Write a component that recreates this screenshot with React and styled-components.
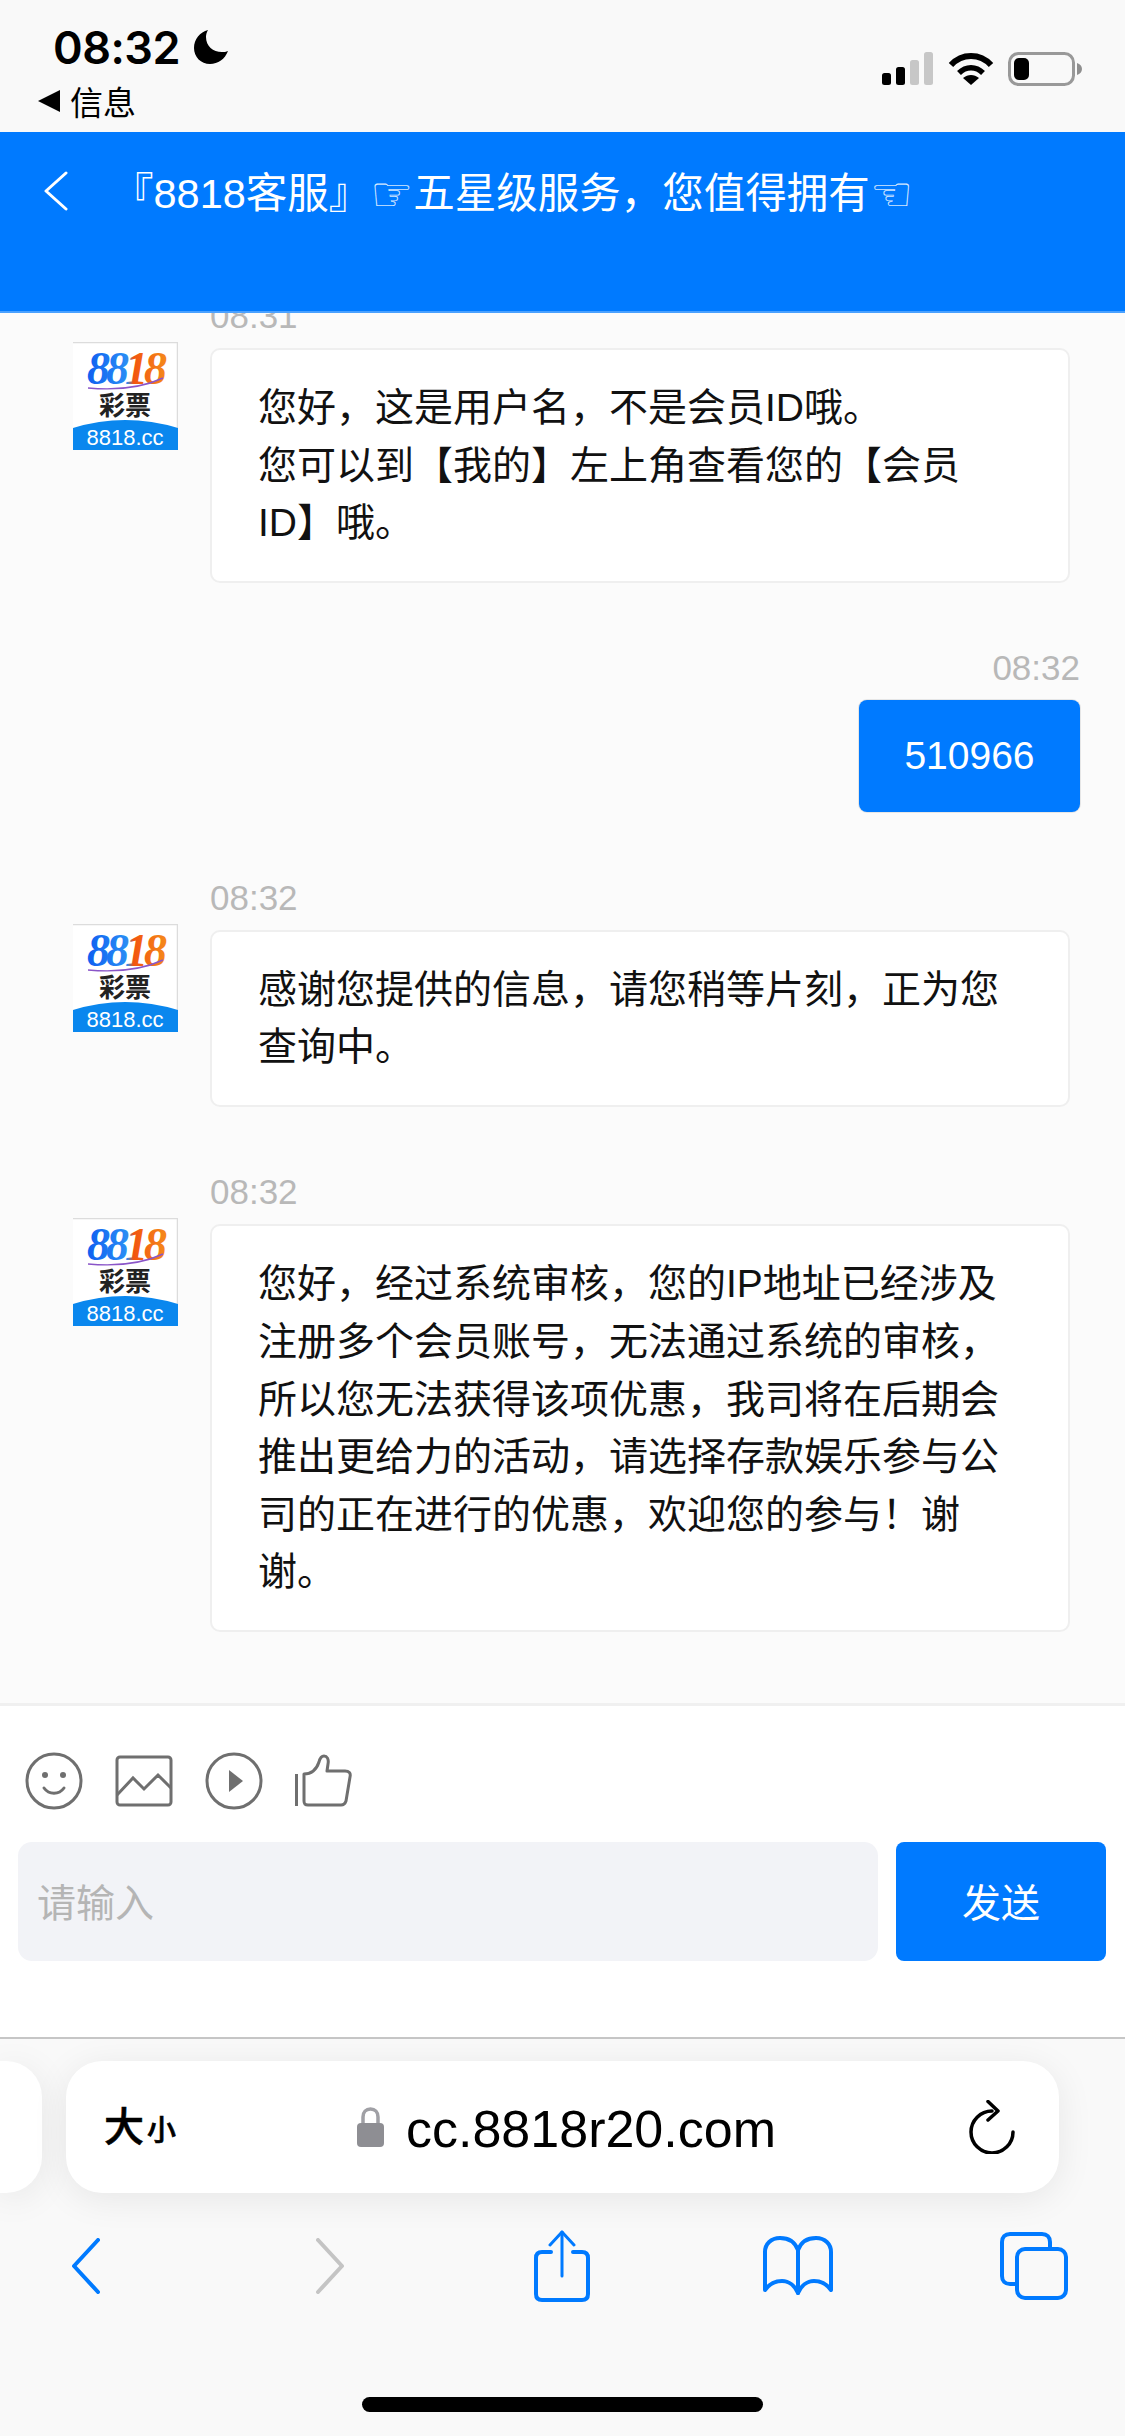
import React from "react";
import styled, { createGlobalStyle } from "styled-components";

const Global = createGlobalStyle`
  html, body { margin: 0; padding: 0; background: #f9f9f9; }
  * { box-sizing: border-box; }
`;

const FONT = `"Liberation Sans", "Noto Sans CJK SC", sans-serif`;

const Page = styled.div`
  width: 1125px;
  height: 2436px;
  display: flex;
  flex-direction: column;
  overflow: hidden;
  font-family: ${FONT};
  color: #000;
`;

/* ---- status bar ---- */
const StatusBar = styled.div`
  height: 132px;
  flex: none;
  background: #f9f9f9;
  display: flex;
  justify-content: space-between;
`;
const StatusLeft = styled.div`
  display: flex;
  flex-direction: column;
  padding: 22px 0 0 53px;
`;
const ClockRow = styled.div`
  display: flex;
  align-items: center;
  gap: 14px;
  height: 50px;
`;
const Clock = styled.span`
  font-family: Inter, "Liberation Sans", sans-serif;
  font-size: 45px;
  font-weight: 600;
  letter-spacing: -0.5px;
`;
const BackToApp = styled.div`
  display: flex;
  align-items: center;
  gap: 10px;
  height: 40px;
  margin: 9px 0 0 -15px;
  font-size: 33px;
`;
const StatusRight = styled.div`
  display: flex;
  align-items: flex-start;
  gap: 14px;
  padding: 52px 43px 0 0;
`;

/* ---- blue header ---- */
const Header = styled.header`
  height: 181px;
  flex: none;
  background: #007aff;
  border-bottom: 2px solid #4aa1ff;
  display: flex;
  align-items: flex-start;
  color: #fff;
  padding: 39px 0 0 44px;
`;
const Title = styled.h1`
  display: flex;
  align-items: center;
  margin: 0 0 0 44px;
  font-size: 41.5px;
  line-height: 46px;
  font-weight: 400;
  white-space: nowrap;
`;
const Hand = styled.span`
  font-family: "DejaVu Sans", sans-serif;
  font-size: 48px;
  line-height: 46px;
  color: rgba(255, 255, 255, 0.85);
`;

/* ---- chat ---- */
const Chat = styled.main`
  flex: none;
  height: 1393px;
  overflow: hidden;
  background: #fbfbfb;
  border-bottom: 3px solid #f0f0f0;
`;
const Thread = styled.div`
  display: flex;
  flex-direction: column;
  gap: 65.5px;
  margin-top: -17px;
`;
const Row = styled.section`
  display: flex;
  justify-content: ${(p) => (p.$mine ? "flex-end" : "flex-start")};
  padding: ${(p) => (p.$mine ? "0 45px 0 0" : "0 0 0 73px")};
`;
const AvatarFrame = styled.div`
  width: 105px;
  height: 108px;
  flex: none;
  margin: 46px 32px 0 0;
`;
const Content = styled.div`
  display: flex;
  flex-direction: column;
  align-items: ${(p) => (p.$mine ? "flex-end" : "flex-start")};
  gap: 12px;
`;
const Time = styled.div`
  height: 40px;
  line-height: 40px;
  font-size: 35px;
  color: #b8b8b8;
`;
const Bubble = styled.div`
  width: 860px;
  padding: 29px 62px 29px 46px;
  background: #fff;
  border: 2px solid #efefef;
  border-radius: 10px;
  font-size: 39px;
  line-height: 57.6px;
  color: #111;
`;
const MineBubble = styled.div`
  width: 221px;
  height: 112px;
  display: flex;
  align-items: center;
  justify-content: center;
  background: #007aff;
  border-radius: 8px;
  box-shadow: 0 0 0 1px #e6e6e6;
  font-size: 39px;
  color: #fff;
`;

/* ---- composer ---- */
const Composer = styled.footer`
  flex: none;
  height: 331px;
  background: #fff;
  padding: 0 19px 0 18px;
`;
const Tools = styled.div`
  height: 136px;
  display: flex;
  align-items: center;
  gap: 32px;
  padding: 14px 0 0 7px;
`;
const InputRow = styled.div`
  display: flex;
  gap: 18px;
  height: 119px;
`;
const Input = styled.div`
  flex: 1;
  display: flex;
  align-items: center;
  padding: 0 0 3px 19px;
  background: #f2f3f7;
  border-radius: 14px;
  font-size: 39px;
  color: #b5b5b5;
`;
const Send = styled.button`
  width: 210px;
  border: 0;
  border-radius: 8px;
  padding: 0 0 3px;
  background: #007aff;
  color: #fff;
  font-family: ${FONT};
  font-size: 39px;
`;

/* ---- safari chrome ---- */
const Browser = styled.nav`
  flex: 1;
  background: #f9f9f9;
  border-top: 2px solid #c6c6c6;
  display: flex;
  flex-direction: column;
`;
const UrlRow = styled.div`
  display: flex;
  gap: 24px;
  height: 132px;
  margin-top: 22px;
`;
const StubCard = styled.div`
  width: 42px;
  background: #fff;
  border-radius: 0 36px 36px 0;
  box-shadow: 0 6px 36px rgba(0, 0, 0, 0.08);
`;
const UrlBar = styled.div`
  width: 993px;
  display: flex;
  align-items: center;
  padding: 0 44px 0 38px;
  background: #fff;
  border-radius: 36px;
  box-shadow: 0 6px 36px rgba(0, 0, 0, 0.08);
`;
const TextSize = styled.div`
  width: 253px;
  display: flex;
  align-items: flex-end;
  gap: 3px;
  height: 46px;
  font-size: 40px;
  line-height: 46px;
  font-weight: 500;
  -webkit-text-stroke: 0.6px #000;
`;
const SmallA = styled.span`
  font-size: 29px;
  line-height: 38px;
`;
const Address = styled.div`
  flex: 1;
  display: flex;
  align-items: center;
  gap: 22px;
  font-size: 52px;
  line-height: 60px;
`;
const UrlText = styled.span`
  position: relative;
  top: 2px;
`;
const ToolBar = styled.div`
  display: grid;
  grid-template-columns: 244px 232px 236px 236px 100px;
  height: 72px;
  margin-top: 37px;
  padding-left: 36px;
`;
const ToolSlot = styled.div`
  width: 100px;
  display: flex;
  align-items: center;
  justify-content: center;
`;
const HomeIndicator = styled.div`
  width: 401px;
  height: 15px;
  margin: 95px auto 0;
  border-radius: 8px;
  background: #000;
`;

/* ---- drawings ---- */
const Logo = () => (
  <svg width="105" height="108" viewBox="0 0 105 108">
    <defs>
      <linearGradient id="logoNum" x1="0" x2="1" y1="0" y2="0">
        <stop offset="0" stopColor="#0f5ff0" />
        <stop offset="0.5" stopColor="#2a8df5" />
        <stop offset="0.58" stopColor="#f2550f" />
        <stop offset="1" stopColor="#f58a1c" />
      </linearGradient>
    </defs>
    <rect width="105" height="108" fill="#fff" />
    <path d="M0 0.5H104.5V108" fill="none" stroke="#dcdcdc" strokeWidth="1.5" />
    <text x="14" y="42" fontFamily="'Liberation Serif', serif" fontStyle="italic" fontWeight="700" fontSize="46" letterSpacing="-4" fill="url(#logoNum)">8818</text>
    <path d="M15 46Q60 50 90 36" fill="none" stroke="#8a55c8" strokeWidth="1.4" />
    <text x="26" y="73" fontFamily="'Noto Sans CJK SC', sans-serif" fontWeight="700" fontSize="26" fill="#222">彩票</text>
    <path d="M0 86Q52 70 105 86V108H0Z" fill="#0a87ee" />
    <text x="52" y="103" textAnchor="middle" fontFamily="'Liberation Sans', sans-serif" fontSize="22" fill="#fff">8818.cc</text>
  </svg>
);

const Moon = () => (
  <svg width="34" height="34" viewBox="0 0 34 34">
    <path d="M14 0C6 2 0 9 0 18c0 9 7 16 16 16 8 0 15-5 18-13-2 1-4 1-6 1C19 22 12 16 12 7c0-2 .6-5 2-7z" fill="#000" />
  </svg>
);

const Signal = () => (
  <svg width="52" height="33" viewBox="0 0 52 33">
    <rect x="0" y="21" width="9" height="12" rx="2.5" fill="#000" />
    <rect x="14" y="15" width="9" height="18" rx="2.5" fill="#000" />
    <rect x="28" y="8" width="9" height="25" rx="2.5" fill="#c7c7c7" />
    <rect x="42" y="0" width="9" height="33" rx="2.5" fill="#c7c7c7" />
  </svg>
);

const Wifi = () => (
  <svg width="46" height="33" viewBox="0 0 46 33">
    <path d="M3 13C14 1 32 1 43 13" fill="none" stroke="#000" strokeWidth="6" />
    <path d="M11 21C18 14 28 14 35 21" fill="none" stroke="#000" strokeWidth="5.5" />
    <path d="M15 26C20 22 26 22 31 26L23 33Z" fill="#000" />
  </svg>
);

const Battery = () => (
  <svg width="74" height="34" viewBox="0 0 74 34">
    <rect x="1.5" y="1.5" width="64" height="31" rx="9" fill="none" stroke="#999" strokeWidth="3" />
    <rect x="6" y="6" width="15" height="22" rx="5" fill="#000" />
    <path d="M69 11C72 12 74 14 74 17C74 20 72 22 69 23Z" fill="#8f8f8f" />
  </svg>
);

const Chevron = ({ w = 24, h = 40, color = "#fff", sw = 3, flip }) => (
  <svg width={w} height={h} viewBox={`0 0 ${w} ${h}`}>
    <path
      d={flip ? `M2 2L${w - 2} ${h / 2}L2 ${h - 2}` : `M${w - 2} 2L2 ${h / 2}L${w - 2} ${h - 2}`}
      fill="none"
      stroke={color}
      strokeWidth={sw}
      strokeLinecap="round"
      strokeLinejoin="round"
    />
  </svg>
);

const ic = { fill: "none", stroke: "#6f6f6f", strokeWidth: 3 };

const Smile = () => (
  <svg width="58" height="58" viewBox="0 0 58 58">
    <circle cx="29" cy="29" r="27" {...ic} />
    <circle cx="20" cy="23" r="3" fill="#6f6f6f" />
    <circle cx="38" cy="23" r="3" fill="#6f6f6f" />
    <path d="M19 36C24 43 34 43 39 36" {...ic} strokeLinecap="round" />
  </svg>
);
const Picture = () => (
  <svg width="58" height="52" viewBox="0 0 58 52">
    <rect x="2" y="2" width="54" height="48" rx="3" {...ic} />
    <path d="M2 40L18 23L29 34L43 20L56 33" {...ic} />
  </svg>
);
const Play = () => (
  <svg width="58" height="58" viewBox="0 0 58 58">
    <circle cx="29" cy="29" r="27" {...ic} />
    <path d="M24 18L38 29L24 40Z" fill="#6f6f6f" />
  </svg>
);
const Thumb = () => (
  <svg width="57" height="54" viewBox="0 0 57 54">
    <path d="M1.5 20V52" {...ic} />
    <path d="M9 20C18 20 22 14 24 8C25 4 27 2 29 2C32 2 34 5 33 10L32 17H50C54 17 56 19 55 23L51 47C50 50 49 51 46 51H13C10 51 9 50 9 47Z" {...ic} strokeLinejoin="round" />
  </svg>
);

const Lock = () => (
  <svg width="27" height="40" viewBox="0 0 27 40">
    <path d="M6 18V10C6 5 9 2 13.5 2S21 5 21 10V18" fill="none" stroke="#a0a0a5" strokeWidth="3.5" />
    <rect x="0" y="16" width="27" height="24" rx="4" fill="#8e8e93" />
  </svg>
);
const Reload = () => (
  <svg width="46" height="54" viewBox="0 0 46 54">
    <path d="M23 11A21 21 0 1 0 44 32" fill="none" stroke="#000" strokeWidth="3.5" strokeLinecap="round" />
    <path d="M19 1.5L29 11L19 20" fill="none" stroke="#000" strokeWidth="3.5" strokeLinecap="round" strokeLinejoin="round" />
  </svg>
);

const tb = { fill: "none", stroke: "#007aff", strokeWidth: 4, strokeLinejoin: "round", strokeLinecap: "round" };

const Share = () => (
  <svg width="56" height="72" viewBox="0 0 56 72">
    <path d="M28 2V46" fill="none" stroke="#007aff" strokeWidth="3" strokeLinecap="round" />
    <path d="M16 15L28 2L40 15" fill="none" stroke="#007aff" strokeWidth="3" strokeLinecap="round" strokeLinejoin="round" />
    <path d="M17 22H8C4 22 2 24 2 28V64C2 68 4 70 8 70H48C52 70 54 68 54 64V28C54 24 52 22 48 22H39" {...tb} />
  </svg>
);
const Book = () => (
  <svg width="72" height="60" viewBox="0 0 72 60">
    <path d="M36 14C33 6 27 2 18 2C9 2 3 8 3 16V54C8 47 14 45 20 45C27 45 33 50 36 57C39 50 45 45 52 45C58 45 64 47 69 54V16C69 8 63 2 54 2C45 2 39 6 36 14Z" {...tb} />
    <path d="M36 14V57" {...tb} />
  </svg>
);
const Tabs = () => (
  <svg width="68" height="68" viewBox="0 0 68 68">
    <path d="M50 17V10C50 5 47 2 42 2H10C5 2 2 5 2 10V44C2 49 5 52 10 52H17" {...tb} />
    <rect x="17" y="17" width="49" height="49" rx="8" {...tb} />
  </svg>
);

const Message = ({ time, children }) => (
  <Row>
    <AvatarFrame>
      <Logo />
    </AvatarFrame>
    <Content>
      <Time>{time}</Time>
      <Bubble>{children}</Bubble>
    </Content>
  </Row>
);

export default function App() {
  return (
    <Page>
      <Global />
      <StatusBar>
        <StatusLeft>
          <ClockRow>
            <Clock>08:32</Clock>
            <Moon />
          </ClockRow>
          <BackToApp>
            <svg width="22" height="22" viewBox="0 0 22 22">
              <path d="M22 0V22L0 11Z" fill="#000" />
            </svg>
            信息
          </BackToApp>
        </StatusLeft>
        <StatusRight>
          <Signal />
          <Wifi />
          <Battery />
        </StatusRight>
      </StatusBar>

      <Header>
        <Chevron />
        <Title>
          『8818客服』<Hand>☞</Hand>五星级服务，您值得拥有<Hand>☜</Hand>
        </Title>
      </Header>

      <Chat>
        <Thread>
          <Message time="08:31">
            您好，这是用户名，不是会员ID哦。
            <br />
            您可以到【我的】左上角查看您的【会员ID】哦。
          </Message>
          <Row $mine>
            <Content $mine>
              <Time>08:32</Time>
              <MineBubble>510966</MineBubble>
            </Content>
          </Row>
          <Message time="08:32">感谢您提供的信息，请您稍等片刻，正为您查询中。</Message>
          <Message time="08:32">
            您好，经过系统审核，您的IP地址已经涉及注册多个会员账号，无法通过系统的审核，所以您无法获得该项优惠，我司将在后期会推出更给力的活动，请选择存款娱乐参与公司的正在进行的优惠，欢迎您的参与！谢谢。
          </Message>
        </Thread>
      </Chat>

      <Composer>
        <Tools>
          <Smile />
          <Picture />
          <Play />
          <Thumb />
        </Tools>
        <InputRow>
          <Input>请输入</Input>
          <Send>发送</Send>
        </InputRow>
      </Composer>

      <Browser>
        <UrlRow>
          <StubCard />
          <UrlBar>
            <TextSize>
              大<SmallA>小</SmallA>
            </TextSize>
            <Address>
              <Lock />
              <UrlText>cc.8818r20.com</UrlText>
            </Address>
            <Reload />
          </UrlBar>
        </UrlRow>
        <ToolBar>
          <ToolSlot><Chevron w={28} h={56} color="#007aff" sw={4} /></ToolSlot>
          <ToolSlot><Chevron w={28} h={56} color="#c4c4c4" sw={4} flip /></ToolSlot>
          <ToolSlot><Share /></ToolSlot>
          <ToolSlot><Book /></ToolSlot>
          <ToolSlot><Tabs /></ToolSlot>
        </ToolBar>
        <HomeIndicator />
      </Browser>
    </Page>
  );
}
